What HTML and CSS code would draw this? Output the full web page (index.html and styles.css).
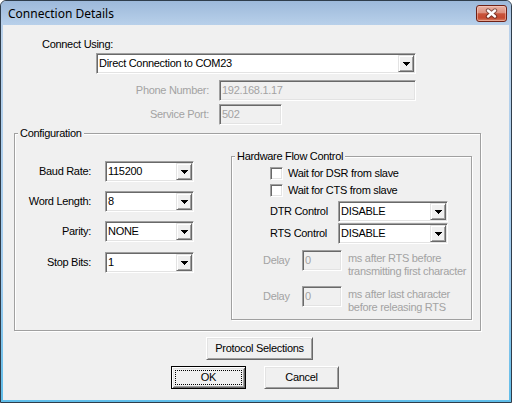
FILE: index.html
```html
<!DOCTYPE html>
<html>
<head>
<meta charset="utf-8">
<title>Connection Details</title>
<link rel="stylesheet" href="styles.css">
</head>
<body>
<div class="window">
  <div class="titlebar">
    <span class="title">Connection Details</span>
    <div class="close">
      <svg width="13" height="11" viewBox="0 0 13 11"><path d="M3 2.5L10 8.5M10 2.5L3 8.5" stroke="#4b2019" stroke-opacity=".6" stroke-width="4.4" stroke-linecap="round"/><path d="M3 2.5L10 8.5M10 2.5L3 8.5" stroke="#fff" stroke-width="2.4" stroke-linecap="round"/></svg>
    </div>
  </div>
  <div class="client">
    <div class="connect-label">Connect Using:</div>
    <div class="combo combo-connect"><span class="combo-text">Direct Connection to COM23</span><span class="drop"><svg width="7" height="4" viewBox="0 0 7 4"><path d="M0 0H7V1H6V2H5V3H4V4H3V3H2V2H1V1H0Z"/></svg></span></div>
    <div class="field-row row-phone"><span class="field-label">Phone Number:</span><div class="edit edit-phone">192.168.1.17</div></div>
    <div class="field-row row-port"><span class="field-label">Service Port:</span><div class="edit edit-port">502</div></div>

    <fieldset class="group config">
      <legend>Configuration</legend>
      <div class="config-body">
        <div class="serial-grid">
          <span class="serial-label">Baud Rate:</span>
          <div class="combo combo-serial"><span class="combo-text">115200</span><span class="drop"><svg width="7" height="4" viewBox="0 0 7 4"><path d="M0 0H7V1H6V2H5V3H4V4H3V3H2V2H1V1H0Z"/></svg></span></div>
          <span class="serial-label">Word Length:</span>
          <div class="combo combo-serial"><span class="combo-text">8</span><span class="drop"><svg width="7" height="4" viewBox="0 0 7 4"><path d="M0 0H7V1H6V2H5V3H4V4H3V3H2V2H1V1H0Z"/></svg></span></div>
          <span class="serial-label">Parity:</span>
          <div class="combo combo-serial"><span class="combo-text">NONE</span><span class="drop"><svg width="7" height="4" viewBox="0 0 7 4"><path d="M0 0H7V1H6V2H5V3H4V4H3V3H2V2H1V1H0Z"/></svg></span></div>
          <span class="serial-label stop">Stop Bits:</span>
          <div class="combo combo-serial stop"><span class="combo-text">1</span><span class="drop"><svg width="7" height="4" viewBox="0 0 7 4"><path d="M0 0H7V1H6V2H5V3H4V4H3V3H2V2H1V1H0Z"/></svg></span></div>
        </div>

        <fieldset class="group hw">
          <legend>Hardware Flow Control</legend>
          <div class="hw-body">
            <div class="check-row first"><span class="checkbox"></span><span>Wait for DSR from slave</span></div>
            <div class="check-row"><span class="checkbox"></span><span>Wait for CTS from slave</span></div>
            <div class="ctl-row dtr"><span class="ctl-label">DTR Control</span><div class="combo combo-ctl"><span class="combo-text">DISABLE</span><span class="drop"><svg width="7" height="4" viewBox="0 0 7 4"><path d="M0 0H7V1H6V2H5V3H4V4H3V3H2V2H1V1H0Z"/></svg></span></div></div>
            <div class="ctl-row rts"><span class="ctl-label">RTS Control</span><div class="combo combo-ctl"><span class="combo-text">DISABLE</span><span class="drop"><svg width="7" height="4" viewBox="0 0 7 4"><path d="M0 0H7V1H6V2H5V3H4V4H3V3H2V2H1V1H0Z"/></svg></span></div></div>
            <div class="delay-row d1"><span class="delay-label">Delay</span><div class="edit edit-delay">0</div><div class="delay-text">ms after RTS before<br>transmitting first character</div></div>
            <div class="delay-row d2"><span class="delay-label">Delay</span><div class="edit edit-delay">0</div><div class="delay-text">ms after last character<br>before releasing RTS</div></div>
          </div>
        </fieldset>
      </div>
    </fieldset>

    <div class="btn btn-protocol">Protocol Selections</div>
    <div class="dialog-buttons">
      <div class="btn btn-default"><span class="focus">OK</span></div>
      <div class="btn btn-cancel">Cancel</div>
    </div>
  </div>
</div>
</body>
</html>
```
FILE: styles.css
```css
* { box-sizing: border-box; }
html, body { margin: 0; padding: 0; }
body {
  width: 512px;
  height: 403px;
  overflow: hidden;
  background: #fff;
  font-family: "Liberation Sans", Arial, sans-serif;
  font-size: 11px;
  line-height: 13px;
  letter-spacing: -0.3px;
  color: #000;
}

.window {
  width: 512px;
  height: 403px;
  border: 1px solid #2f3d4b;
  border-radius: 6px 6px 0 0;
  background: linear-gradient(#b6cee9 0, #b9d1ea 40px, #9fcbee 70%, #5fbde9 100%);
  display: flex;
  flex-direction: column;
  overflow: hidden;
}

.titlebar {
  height: 24px;
  flex: none;
  display: flex;
  align-items: flex-start;
  padding-left: 7px;
  background: linear-gradient(#9db9da, #b8d0ea);
  border-radius: 5px 5px 0 0;
}
.title {
  font-family: "Noto Sans", "Open Sans", sans-serif;
  font-size: 12px;
  line-height: 16px;
  letter-spacing: 0;
  margin-top: 5px;
}
.close {
  margin-left: auto;
  margin-right: 4px;
  margin-top: 4px;
  width: 31px;
  height: 17px;
  border: 1px solid #6f2116;
  border-radius: 3px;
  background: linear-gradient(#e9b2a5 0%, #dd917f 45%, #c8543b 52%, #c64a30 80%, #d8866a 100%);
  box-shadow: inset 0 0 0 1px rgba(255, 215, 205, 0.45);
  display: flex;
  align-items: center;
  justify-content: center;
}

.client {
  flex: none;
  height: 375px;
  margin: 0 2px;
  background: #f0f0f0;
  display: flex;
  flex-direction: column;
  align-items: flex-start;
}

/* common controls */
.combo {
  display: flex;
  height: 21px;
  background: #fff;
  border: 1px solid;
  border-color: #a0a0a0 #fff #fff #a0a0a0;
  box-shadow: inset 1px 1px #696969, inset -1px -1px #e3e3e3;
  padding: 1px;
}
.combo-text {
  flex: 1;
  padding-left: 1px;
  line-height: 17px;
  white-space: nowrap;
  overflow: hidden;
}
.drop {
  flex: none;
  width: 16px;
  height: 17px;
  background: #f0f0f0;
  border: 1px solid;
  border-color: #e3e3e3 #696969 #696969 #e3e3e3;
  box-shadow: inset 1px 1px #fff, inset -1px -1px #a0a0a0;
  display: flex;
  align-items: center;
  justify-content: center;
  padding-top: 1px;
}
.drop svg { display: block; fill: #000; }

.edit {
  height: 21px;
  border: 1px solid;
  border-color: #a0a0a0 #fff #fff #a0a0a0;
  box-shadow: inset 1px 1px #696969, inset -1px -1px #e3e3e3;
  padding: 1px 2px;
  line-height: 17px;
  color: #a3a3a3;
  background: #f0f0f0;
  white-space: nowrap;
}

.checkbox {
  flex: none;
  width: 13px;
  height: 13px;
  background: #fff;
  border: 1px solid;
  border-color: #a0a0a0 #fff #fff #a0a0a0;
  box-shadow: inset 1px 1px #696969, inset -1px -1px #e3e3e3;
}

.btn {
  height: 23px;
  display: flex;
  align-items: center;
  justify-content: center;
  background: #f0f0f0;
  border: 1px solid;
  border-color: #fff #696969 #696969 #fff;
  box-shadow: inset 1px 1px #e3e3e3, inset -1px -1px #a0a0a0;
  white-space: nowrap;
}

.group {
  margin: 0;
  padding: 0;
  min-width: 0;
  border: 1px solid #a0a0a0;
  box-shadow: inset 1px 1px #fff, 1px 1px #fff;
}
.group legend {
  margin-left: 3px;
  padding: 0 2px;
  line-height: 13px;
  background: #f0f0f0;
}

/* top section */
.connect-label {
  margin-top: 13px;
  margin-left: 39px;
}
.combo-connect {
  margin-top: 2px;
  margin-left: 93px;
  width: 320px;
}
.field-row {
  display: flex;
  align-items: center;
  gap: 10px;
}
.row-phone { margin-top: 6px; }
.row-port { margin-top: 3px; }
.field-label {
  width: 206px;
  text-align: right;
  color: #a3a3a3;
}
.edit-phone { width: 197px; }
.edit-port { width: 63px; }

/* configuration */
.config {
  margin-top: 2px;
  margin-left: 11px;
  width: 467px;
}
.config-body {
  height: 190px;
  display: flex;
  align-items: flex-start;
}
.serial-grid {
  margin-top: 21px;
  display: grid;
  grid-template-columns: 76px 89px;
  grid-auto-rows: 21px;
  column-gap: 14px;
  row-gap: 9px;
  align-items: center;
}
.serial-label { text-align: right; }
.serial-label.stop, .combo-serial.stop { margin-top: 2px; }

.hw {
  margin-top: 10px;
  margin-left: 37px;
  width: 241px;
}
.hw-body {
  height: 156px;
  display: flex;
  flex-direction: column;
  align-items: flex-start;
}
.check-row {
  margin-top: 4px;
  margin-left: 38px;
  display: flex;
  align-items: center;
  gap: 5px;
  height: 13px;
}
.ctl-row {
  margin-left: 38px;
  display: flex;
  align-items: center;
}
.ctl-row.dtr { margin-top: 4px; }
.ctl-row.rts { margin-top: 1px; }
.ctl-label { width: 68px; }
.combo-ctl { width: 110px; }

.delay-row {
  margin-left: 31px;
  display: flex;
  align-items: flex-start;
  color: #a3a3a3;
}
.delay-row.d1 { margin-top: 6px; }
.delay-row.d2 { margin-top: 8px; }
.delay-label {
  width: 39px;
  line-height: 21px;
}
.edit-delay { width: 40px; }
.delay-text {
  margin-left: 6px;
  margin-top: 2px;
  white-space: nowrap;
}

/* bottom buttons */
.btn-protocol {
  margin-top: 6px;
  margin-left: 203px;
  width: 107px;
}
.dialog-buttons {
  margin-top: 6px;
  margin-left: 168px;
  display: flex;
  gap: 18px;
}
.btn-default, .btn-cancel { width: 75px; }
.btn-default {
  border: 1px solid #000;
  box-shadow: inset 1px 1px #fff, inset -1px -1px #696969, inset 2px 2px #e3e3e3, inset -2px -2px #a0a0a0;
  align-items: stretch;
}
.focus {
  flex: 1;
  margin: 3px;
  border: 1px dotted #000;
  display: flex;
  align-items: center;
  justify-content: center;
}
```
